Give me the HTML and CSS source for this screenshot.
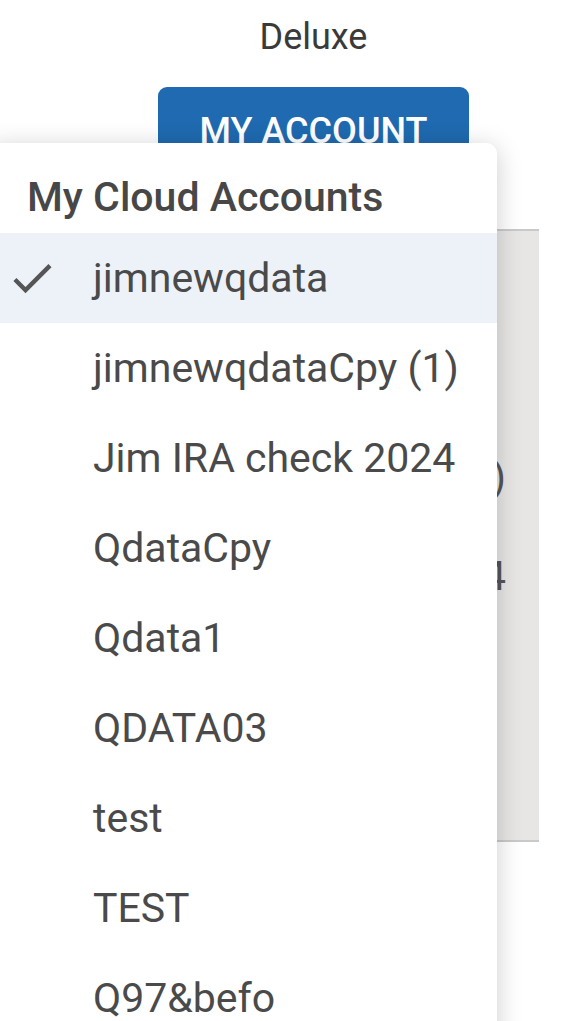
FILE: index.html
```html
<!DOCTYPE html>
<html>
<head>
<meta charset="utf-8">
<link rel="stylesheet" href="styles.css">
</head>
<body>
<div class="page">
  <header class="head">
    <div class="plan">Deluxe</div>
    <button class="account-btn">MY ACCOUNT</button>
  </header>
  <section class="panel">
    <div class="panel-line">(1)</div>
    <div class="panel-line">2024</div>
  </section>
  <div class="menu">
    <div class="menu-title">My Cloud Accounts</div>
    <ul class="menu-list">
      <li class="menu-item selected">
        <svg class="check" viewBox="0 0 24 24"><path d="M9 16.17L4.83 12l-1.42 1.41L9 19 21 7l-1.41-1.41z"/></svg>
        <span>jimnewqdata</span>
      </li>
      <li class="menu-item"><span>jimnewqdataCpy (1)</span></li>
      <li class="menu-item"><span>Jim IRA check 2024</span></li>
      <li class="menu-item"><span>QdataCpy</span></li>
      <li class="menu-item"><span>Qdata1</span></li>
      <li class="menu-item"><span>QDATA03</span></li>
      <li class="menu-item"><span>test</span></li>
      <li class="menu-item"><span>TEST</span></li>
      <li class="menu-item"><span>Q97&amp;befo</span></li>
    </ul>
  </div>
</div>
</body>
</html>
```

FILE: styles.css
```css
html, body {
  margin: 0;
  padding: 0;
  background: #ffffff;
  overflow: hidden;
}
body {
  font-family: Roboto, "Liberation Sans", sans-serif;
  width: 582px;
  height: 1021px;
}
.page {
  position: relative;
  width: 582px;
  height: 1021px;
  overflow: hidden;
}
.head {
  margin-left: 158px;
  width: 311px;
  padding-top: 16px;
  display: flex;
  flex-direction: column;
  align-items: center;
}
.plan {
  font-size: 36px;
  line-height: 42px;
  color: #3a3a3a;
}
.account-btn {
  margin-top: 29px;
  width: 311px;
  height: 88px;
  border: none;
  border-radius: 9px;
  background: #1f6ab0;
  color: #ffffff;
  font-family: Roboto, "Liberation Sans", sans-serif;
  font-weight: 500;
  font-size: 36px;
  padding: 0;
}
.panel {
  margin-top: 54px;
  margin-left: 300px;
  width: 239px;
  height: 412px;
  box-sizing: content-box;
  background: #e7e6e4;
  border-top: 2px solid #c9c9c9;
  border-bottom: 2px solid #c9c9c9;
  padding-top: 197px;
}
.panel-line {
  font-size: 40px;
  line-height: 99px;
  color: #555;
  text-align: right;
  padding-right: 33px;
  white-space: nowrap;
}
.menu {
  position: absolute;
  top: 143px;
  left: -12px;
  width: 509px;
  height: 1000px;
  background: #ffffff;
  border-radius: 11px;
  box-shadow: 0 4px 26px rgba(0, 0, 0, 0.2);
}
.menu-title {
  padding-left: 39px;
  padding-top: 18px;
  height: 72px;
  line-height: 72px;
  font-size: 41px;
  font-weight: 500;
  color: #474747;
}
.menu-list {
  list-style: none;
  margin: 0;
  padding: 0;
}
.menu-item {
  position: relative;
  height: 90px;
  line-height: 90px;
  padding-left: 105px;
  font-size: 41px;
  color: #4a4a4a;
  white-space: nowrap;
}
.menu-item.selected {
  background: #edf2f9;
}
.check {
  position: absolute;
  left: 18px;
  top: 19px;
  width: 52px;
  height: 52px;
  fill: #555555;
}
```
